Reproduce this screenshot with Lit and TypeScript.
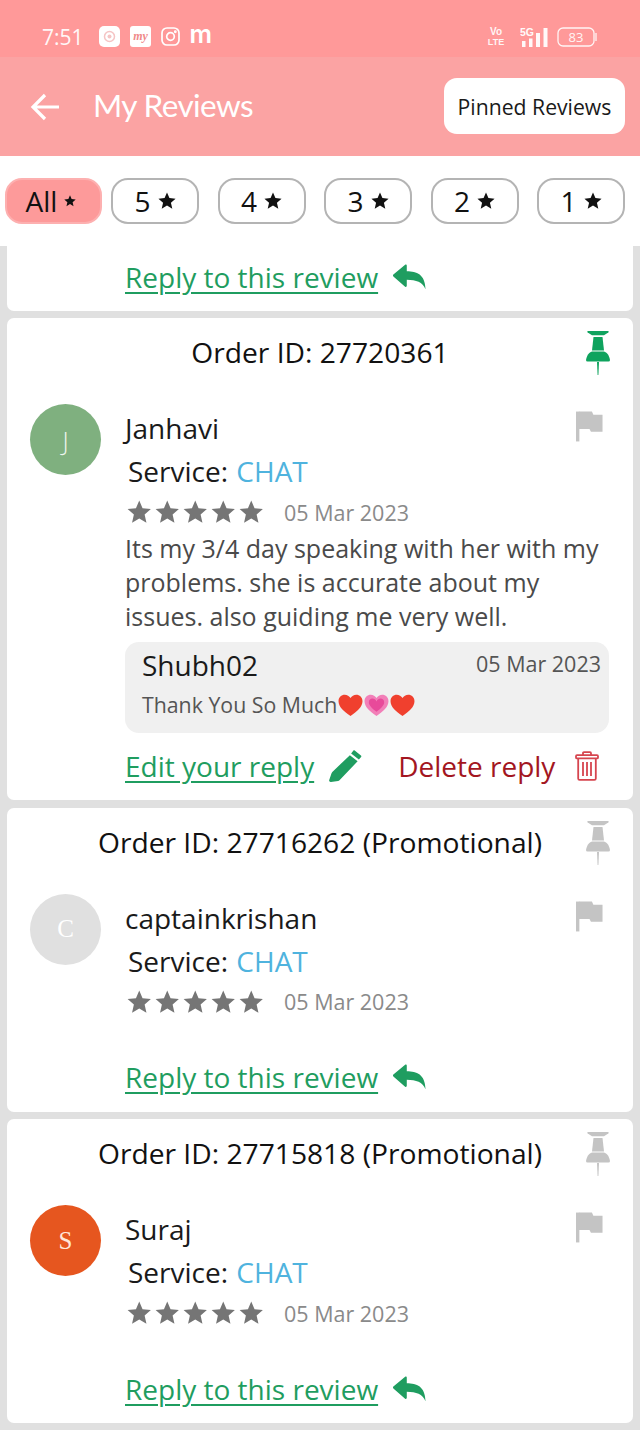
import { LitElement, html, css, svg } from "lit";
import { customElement } from "lit/decorators.js";

const star = (x: number, s: number) => {
  const r = s / 2;
  const pts: string[] = [];
  for (let i = 0; i < 10; i++) {
    const a = -Math.PI / 2 + (i * Math.PI) / 5;
    const rr = i % 2 ? r * 0.46 : r;
    pts.push(`${(x + r + rr * Math.cos(a)).toFixed(2)},${(r * 1.05 + rr * Math.sin(a)).toFixed(2)}`);
  }
  return svg`<polygon points=${pts.join(" ")} />`;
};

const starRow = html`<svg class="stars" viewBox="0 0 137 24" width="137" height="24" fill="#757575">
  ${[0, 28, 56, 84, 112].map((x) => star(x, 24.5))}
</svg>`;

const chipStar = (size: number) =>
  html`<svg class="chipstar" viewBox="0 0 ${size} ${size}" width=${size} height=${size} fill="#111">${star(0, size)}</svg>`;

const pin = (color: string) => html`<svg class="pin" viewBox="0 0 24 44" width="24" height="44" fill=${color}>
  <path d="M2 0h20c.8 0 1 1 .3 1.500L18 4.300H6L1.700 1.500C1 1 1.200 0 2 0z" />
  <path d="M7.500 6h9l1.500 13.500H6z" />
  <path d="M6 20.500h12c2.800.8 5.300 4 6 8.500a1.500 1.500 0 0 1-1.500 1.500h-21A1.500 1.500 0 0 1 0 29c.7-4.500 3.200-7.700 6-8.500z" />
  <path d="M11 31h2l-.6 13h-.8z" />
</svg>`;

const flag = html`<svg class="flag" viewBox="0 0 28 31" width="27" height="31" fill="#c4c4c4">
  <path d="M0 0h3.500v31H0z" />
  <path d="M3 0h13.500l1.500 3.300h9.500V21H15.500L14 18H3z" />
</svg>`;

const replyIcon = html`<svg viewBox="0 0 34 26" width="33" height="26" fill="#1f9d60">
  <path d="M.400 10.300 12.500.300c.8-.6 1.700-.1 1.700.9V7C24.500 7.300 33 9.800 33.500 25.500c-3-7.500-9.500-9.500-19.300-9.700v6.300c0 1-.9 1.500-1.700.9L.400 12.500c-.6-.6-.6-1.600 0-2.200z" />
</svg>`;

const pencil = html`<svg viewBox="0 0 34 33" width="33" height="32" fill="#1f9d60">
  <path d="M26.500.600l6.400 5c.5.4.6 1.100.2 1.600l-2.300 2.700-8-6.200L25 .8c.4-.5 1-.6 1.500-.2z" />
  <path d="M21.500 5.300l8 6.300L10.800 31.200c-.4.400-.9.700-1.500.8L2 33c-1.300.1-2.200-1-1.800-2.100l2.400-6.800c.2-.5.4-1 .8-1.400z" />
</svg>`;

const trash = html`<svg viewBox="0 0 24 30" width="24" height="30" fill="none" stroke="#d6454f" stroke-width="1.800">
  <path d="M8 4V2.200c0-.6.4-1 1-1h6c.6 0 1 .4 1 1V4" />
  <rect x="1" y="4.200" width="22" height="3.200" rx="1" />
  <path d="M3.200 8v19.500c0 .8.600 1.400 1.400 1.400h14.800c.8 0 1.400-.6 1.400-1.400V8" />
  <path d="M8 11v14M12 11v14M16 11v14" />
</svg>`;

const heart = (c: string, inner?: string) => html`<svg class="heart" viewBox="0 0 26 24" width="25" height="23">
  <path d="M13 23C6 18 .5 13.500.5 7.500.5 3.500 3.500.800 7 .800c2.500 0 4.700 1.300 6 3.500C14.300 2.100 16.500.800 19 .800c3.500 0 6.500 2.700 6.500 6.700C25.500 13.500 20 18 13 23z" fill=${c} />
  ${inner ? svg`<path d="M13 18.500C8.500 15 5 12 5 8.500 5 6.300 6.800 4.800 8.700 4.800c1.800 0 3.300 1 4.300 3 1-2 2.500-3 4.300-3 1.900 0 3.700 1.500 3.700 3.700 0 3.500-3.500 6.500-8 10z" fill=${inner} />` : ""}
</svg>`;

interface Review {
  order: string;
  initial: string;
  color: string;
  initialColor: string;
  name: string;
  pinned: boolean;
  sans?: boolean;
}

@customElement("app-root")
export class AppRoot extends LitElement {
  static styles = css`
    :host {
      display: block;
      width: 640px;
      height: 1430px;
      overflow: hidden;
      font-family: "Open Sans", "Noto Sans", sans-serif;
      background: #e0e0e0;
      color: #111;
    }
    .status {
      height: 57px;
      background: #ff9999;
      color: #fff;
      display: flex;
      align-items: center;
      padding: 16px 42px 0;
      box-sizing: border-box;
      font-size: 21px;
    }
    .time { margin-right: 15px; opacity: .92; }
    .sicons { display: flex; align-items: center; gap: 10px; }
    .mlogo { font-family: "Inter", sans-serif; font-weight: 600; font-size: 25px; line-height: 21px; margin-top: -5px; }
    .sright { margin-left: auto; display: flex; align-items: center; margin-right: 1px; }
    .app {
      height: 99px;
      background: #fba3a3;
      display: flex;
      align-items: center;
      padding: 0 15px 0 30px;
      box-sizing: border-box;
    }
    .app-title {
      margin-left: 33px;
      margin-top: -4px;
      font-family: "Lato", sans-serif;
      font-weight: 400;
      color: #fff;
      font-size: 31.500px;
      letter-spacing: -.6px;
      flex: 1;
    }
    .pinned {
      width: 181px;
      height: 56px;
      margin-top: -1px;
      background: #fff;
      border-radius: 13px;
      display: flex;
      align-items: center;
      justify-content: center;
      font-size: 21.200px;
      color: #1a1a1a;
    }
    .filters {
      height: 90px;
      background: #fff;
      box-sizing: border-box;
      padding: 22px 0 0 5px;
      display: flex;
      gap: 19px;
    }
    .chip {
      width: 88px;
      margin-right: -.5px;
      height: 46px;
      box-sizing: border-box;
      border: 2px solid #b4b4b4;
      border-radius: 17px;
      display: flex;
      align-items: center;
      justify-content: center;
      gap: 7px;
      font-size: 28px;
      color: #111;
    }
    .chip.on {
      width: 97px;
      margin-right: -10px;
      background: #fd9a9a;
      border-color: #fdb0b0;
      gap: 7px;
      padding-right: 5px;
    }
    .chipstar { display: block; }
    .list {
      display: flex;
      flex-direction: column;
      gap: 7.500px;
      padding: 0 7px;
    }
    .card {
      background: #fff;
      border-radius: 7px;
      position: relative;
    }
    .partial {
      height: 64.500px;
      border-radius: 0 0 7px 7px;
      box-sizing: border-box;
      padding: 12px 0 0 118px;
    }
    .title {
      height: 68px;
      margin-bottom: 2px;
      display: flex;
      align-items: center;
      justify-content: center;
      font-size: 28.200px;
    }
    .pin { position: absolute; right: 23px; top: 13px; }
    .row {
      display: flex;
      padding-left: 23px;
      position: relative;
    }
    .flag { position: absolute; right: 30px; top: 23px; }
    .avatar {
      width: 71px;
      height: 71px;
      flex: none;
      margin-top: 16px;
      border-radius: 50%;
      display: flex;
      align-items: center;
      justify-content: center;
      font-size: 25px;
      font-family: "Liberation Serif", serif;
    }
    .avatar.sans { font-family: "Open Sans", sans-serif; font-weight: 300; }
    .content {
      margin-left: 24px;
      flex: 1;
      padding-right: 24px;
      min-width: 0;
      padding-top: 19px;
    }
    .name { font-size: 28px; line-height: 42px; color: #1a1a1a; }
    .service { font-size: 28px; line-height: 44px; margin-left: 3px; color: #1a1a1a; }
    .chat { color: #4fb3de; margin-left: 1px; }
    .meta { display: flex; align-items: center; height: 38px; margin-left: 2px; }
    .stars { display: block; }
    .date { font-size: 21.500px; color: #8a8a8a; margin-left: 20px; }
    .text { font-size: 25px; line-height: 34px; color: #4a4a4a; }
    .replybox {
      background: #f0f0f0;
      border-radius: 14px;
      height: 91px;
      box-sizing: border-box;
      margin-top: 9px;
      padding: 4px 8px 0 17px;
    }
    .rtop { display: flex; justify-content: space-between; align-items: center; height: 38px; }
    .rname { font-size: 28px; color: #1a1a1a; }
    .rdate { font-size: 21.500px; color: #555; margin-top: -4px; }
    .rtext {
      display: flex;
      align-items: center;
      font-size: 21.300px;
      color: #555;
      margin-top: 7px;
      line-height: 28px;
    }
    .heart { display: block; margin-left: 1px; }
    .actions {
      display: flex;
      align-items: center;
      height: 65px;
      padding-bottom: 2px;
      margin-right: -1px;
    }
    .link {
      font-size: 28px;
      color: #1f9d60;
      text-decoration: underline;
      text-underline-offset: 4px;
      text-decoration-thickness: 1.500px;
    }
    .gap1 { margin-left: 15px; display: flex; }
    .del { color: #a31621; font-size: 28px; margin-left: 36px; }
    .gap2 { margin-left: 20px; display: flex; }
    .plain { height: 57px; margin-top: 28px; }
    .replyline { display: flex; align-items: center; gap: 15px; }
    .short { height: 304px; }
    .net { overflow: visible; }
  `;

  private head(r: Review) {
    return html`
      <div class="title">Order ID: ${r.order}</div>
      ${pin(r.pinned ? "#0fa35e" : "#c4c4c4")}
    `;
  }

  private info(r: Review) {
    return html`
      <div class="name">${r.name}</div>
      <div class="service">Service: <span class="chat">CHAT</span></div>
      <div class="meta">${starRow}<span class="date">05 Mar 2023</span></div>
    `;
  }

  private avatar(r: Review) {
    return html`<div class="avatar ${r.sans ? "sans" : ""}" style="background:${r.color};color:${r.initialColor}">${r.initial}</div>`;
  }

  private plainCard(r: Review) {
    return html`<div class="card short">
      ${this.head(r)}
      <div class="row">
        ${this.avatar(r)}
        <div class="content">
          ${this.info(r)}
          <div class="replyline plain">
            <span class="link">Reply to this review</span>${replyIcon}
          </div>
        </div>
        ${flag}
      </div>
    </div>`;
  }

  render() {
    const janhavi: Review = { order: "27720361", initial: "J", color: "#7fb07f", initialColor: "#eef6ee", name: "Janhavi", pinned: true, sans: true };
    const captain: Review = { order: "27716262 (Promotional)", initial: "C", color: "#e0e0e0", initialColor: "#fff", name: "captainkrishan", pinned: false };
    const suraj: Review = { order: "27715818 (Promotional)", initial: "S", color: "#e6561f", initialColor: "#ffe6d8", name: "Suraj", pinned: false };
    return html`
      <div class="status">
        <span class="time">7:51</span>
        <div class="sicons">
          <svg width="21" height="21" viewBox="0 0 21 21"><rect width="21" height="21" rx="5" fill="#fff"/><circle cx="10.500" cy="10.500" r="5" fill="none" stroke="#f5c4c4" stroke-width="1.500"/><circle cx="10.500" cy="10.500" r="2" fill="#f5c4c4"/></svg>
          <svg width="21" height="21" viewBox="0 0 21 21"><rect width="21" height="21" rx="3" fill="#fff"/><text x="10.500" y="14" font-size="12" font-weight="700" font-style="italic" text-anchor="middle" fill="#f08a8a" font-family="Liberation Serif">my</text></svg>
          <svg width="19" height="19" viewBox="0 0 19 19" fill="none" stroke="#fff" stroke-width="1.700"><rect x="1" y="1" width="17" height="17" rx="5"/><circle cx="9.500" cy="9.500" r="3.800"/><circle cx="14.300" cy="4.700" r=".6" fill="#fff"/></svg>
          <span class="mlogo">m</span>
        </div>
        <div class="sright">
          <svg class="net" width="16" height="21" viewBox="0 0 16 21" fill="#fff" opacity=".9" font-family="Liberation Sans" font-weight="700" text-anchor="middle"><text x="8" y="9" font-size="10">Vo</text><text x="8" y="19" font-size="9">LTE</text></svg>
          <svg style="margin-left:16px" width="28" height="20" viewBox="0 0 28 20" fill="#fff" opacity=".95"><text x="0" y="9" font-size="10.500" font-weight="700" font-family="Liberation Sans">5G</text><path d="M2 14h3.500v6H2zM9 11.500h3.500V20H9zM16 6h4v14h-4zM23.500 1h4v19h-4z"/></svg>
          <svg style="margin-left:9px" width="40" height="20" viewBox="0 0 40 20" fill="none" stroke="#fff" stroke-width="1.300" opacity=".9"><rect x="1" y="1" width="36" height="18" rx="5"/><path d="M39 6v8"/><text x="19" y="15" font-size="13" text-anchor="middle" fill="#fff" stroke="none" font-family="Open Sans">83</text></svg>
        </div>
      </div>
      <div class="app">
        <svg width="30" height="30" viewBox="0 0 30 30" fill="none" stroke="#fff" stroke-width="3.200"><path d="M29 15H3M15 3 3 15l12 12"/></svg>
        <span class="app-title">My Reviews</span>
        <div class="pinned">Pinned Reviews</div>
      </div>
      <div class="filters">
        <div class="chip on">All${chipStar(12)}</div>
        ${["5", "4", "3", "2", "1"].map((n) => html`<div class="chip">${n}${chipStar(18)}</div>`)}
      </div>
      <div class="list">
        <div class="card partial">
          <div class="replyline"><span class="link">Reply to this review</span>${replyIcon}</div>
        </div>
        <div class="card">
          ${this.head(janhavi)}
          <div class="row">
            ${this.avatar(janhavi)}
            <div class="content">
              ${this.info(janhavi)}
              <div class="text">Its my 3/4 day speaking with her with my problems. she is accurate about my issues. also guiding me very well.</div>
              <div class="replybox">
                <div class="rtop"><span class="rname">Shubh02</span><span class="rdate">05 Mar 2023</span></div>
                <div class="rtext">Thank You So Much${heart("#f0402e")}${heart("#f27fb8", "#e84a9a")}${heart("#f0402e")}</div>
              </div>
              <div class="actions">
                <span class="link">Edit your reply</span><span class="gap1">${pencil}</span>
                <span class="del">Delete reply</span><span class="gap2">${trash}</span>
              </div>
            </div>
            ${flag}
          </div>
        </div>
        ${this.plainCard(captain)}
        ${this.plainCard(suraj)}
      </div>
    `;
  }
}
